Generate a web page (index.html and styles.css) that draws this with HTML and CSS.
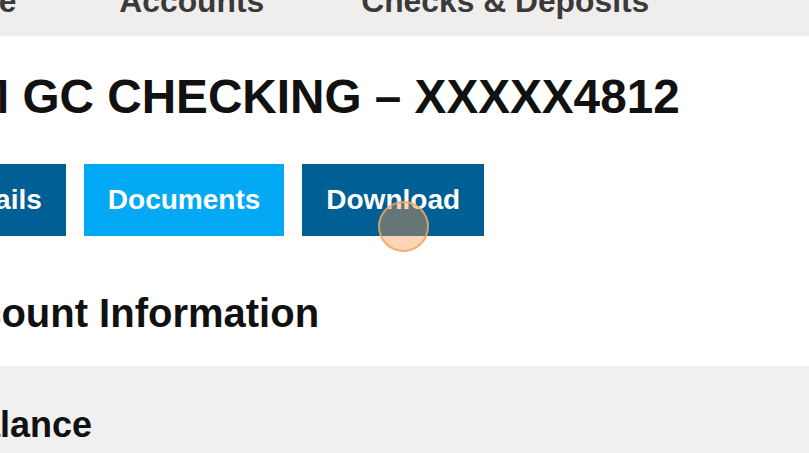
FILE: index.html
```html
<!DOCTYPE html>
<html lang="en">
<head>
    <meta charset="UTF-8">
    <meta name="viewport" content="width=device-width, initial-scale=1.0">
    <title>GC Checking - Account Details</title>
    <link rel="stylesheet" href="styles.css">
</head>
<body>
    <div class="page">
        <nav class="topnav">
            <a href="#" class="nav-link nav-home">Home</a>
            <a href="#" class="nav-link">Accounts</a>
            <a href="#" class="nav-link">Checks &amp; Deposits</a>
        </nav>

        <h1 class="account-title">PREMIUM GC CHECKING – XXXXX4812</h1>

        <div class="tabs">
            <a href="#" class="tab">Details</a>
            <a href="#" class="tab tab-active">Documents</a>
            <a href="#" class="tab">Download</a>
        </div>

        <h2 class="section-title">Account Information</h2>

        <div class="info-panel">
            <h3 class="info-label">Balance</h3>
        </div>
    </div>

    <div class="click-marker"></div>
</body>
</html>
```

FILE: styles.css
```css
* {
    margin: 0;
    padding: 0;
    box-sizing: border-box;
}

html, body {
    height: 100%;
    overflow: hidden;
}

body {
    font-family: "Liberation Sans", Arial, sans-serif;
    background: #fff;
    color: #111;
    position: relative;
}

/* page is shown scrolled: part of it sits off the left and top edge */
.page {
    margin: -34px 0 0 -72px;
    width: calc(100% + 72px);
}

.topnav {
    display: flex;
    gap: 97px;
    height: 70px;
    line-height: 70px;
    background: #f0eeed;
}

.nav-link {
    color: #3a3a3a;
    font-size: 31.8px;
    font-weight: bold;
    text-decoration: none;
}

.nav-home {
    margin-right: 6px;
}

.account-title {
    margin: 33px 0 0 -144px;
    font-size: 47.7px;
    line-height: 56px;
    font-weight: bold;
    color: #111;
    white-space: nowrap;
}

.tabs {
    display: flex;
    gap: 18px;
    margin: 39px 0 0 -2px;
}

.tab {
    display: flex;
    align-items: center;
    height: 72px;
    padding: 0 24px;
    background: #005f95;
    color: #fff;
    font-size: 28px;
    font-weight: bold;
    text-decoration: none;
}

.tab-active {
    background: #03a9f4;
}

.section-title {
    margin-top: 54px;
    font-size: 40px;
    line-height: 46px;
    font-weight: bold;
    color: #111;
}

.info-panel {
    margin-top: 30px;
    padding: 37px 0 40px 26px;
    background: #f0f0f0;
}

.info-label {
    font-size: 36px;
    line-height: 44px;
    font-weight: bold;
    color: #111;
}

.click-marker {
    position: absolute;
    left: 378px;
    top: 201px;
    width: 51px;
    height: 51px;
    border-radius: 50%;
    background: rgba(255, 150, 70, 0.4);
    border: 2px solid rgba(240, 165, 95, 0.85);
}
```
